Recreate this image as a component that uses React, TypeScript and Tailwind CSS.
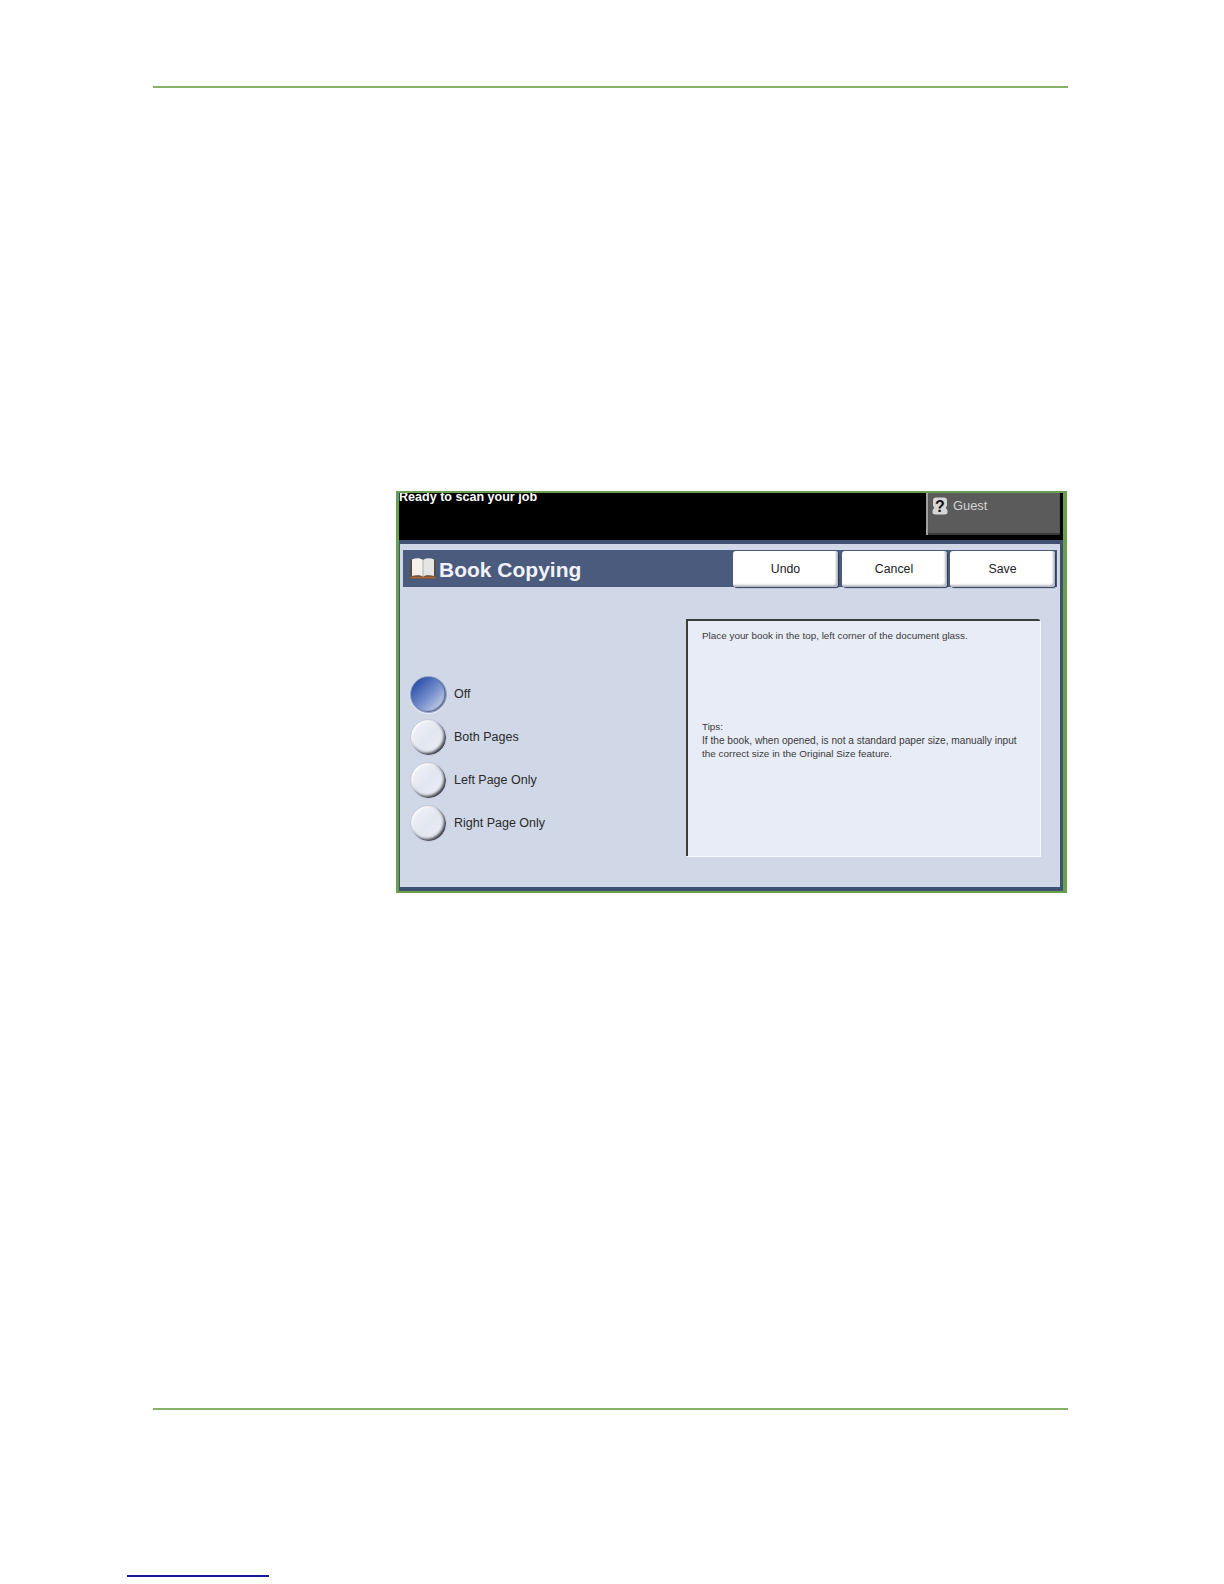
function BookIcon() {
  return (
    <svg width="26" height="21" viewBox="0 0 26 21">
      <path d="M0.5 2 V20.5 H25.5 V2 Z" fill="#5f4630" />
      <path d="M0.5 18.5 H25.5 V20.5 H0.5 Z" fill="#a5673a" />
      <path d="M2 1.5 C6 -0.3 10 -0.2 13 2 V18.5 C10 17 6 17 2 18 Z" fill="#f3f1ea" />
      <path d="M24 1.5 C20 -0.3 16 -0.2 13 2 V18.5 C16 17 20 17 24 18 Z" fill="#e4e5e4" />
      <path d="M13 2 V18.5" stroke="#a3a39d" strokeWidth="0.8" />
    </svg>
  );
}

function HelpIcon() {
  return (
    <svg width="16" height="18" viewBox="0 0 16 18" className="shrink-0">
      <path d="M4 0.5 H12 C14 0.5 15 1.5 15 3.5 V8 C15 9.5 14 9.5 14 11 C14 12 15.5 12.5 15.5 14 V15 C15.5 16.8 14.5 17.5 12.5 17.5 H3.5 C1.5 17.5 0.5 16.8 0.5 15 V14 C0.5 12.5 2 12 2 11 C2 9.5 1 9.5 1 8 V3.5 C1 1.5 2 0.5 4 0.5 Z" fill="#d6d6d6" />
      <text x="8" y="14.5" textAnchor="middle" fontSize="16" fontWeight="700" fontFamily="Liberation Sans, sans-serif" fill="#141414">?</text>
    </svg>
  );
}

function Radio({ label, on, className }: { label: string; on?: boolean; className: string }) {
  return (
    <div className={`flex items-center ${className}`}>
      <div
        className={
          on
            ? "h-[37px] w-[37px] rounded-full border border-[#8f9fc4] bg-gradient-to-br from-[#153a9e] via-[#7089c8] to-[#e2e6f2] shadow-[inset_-1.5px_-1px_1px_rgba(40,50,80,0.6),0_1px_1px_#eef1f8]"
            : "h-[37px] w-[37px] rounded-full border border-[#c4cadb] bg-gradient-to-br from-[#f3f5fa] via-[#e2e6f0] to-[#eef0f7] shadow-[inset_-2px_-2px_3px_#3a3d47,inset_1px_1px_2px_#ffffff]"
        }
      />
      <span className="ml-[7px] text-[12.5px] leading-none text-[#2a2a2a]">{label}</span>
    </div>
  );
}

function ActionButton({ label }: { label: string }) {
  return (
    <button className="flex h-[36px] w-[105px] items-center justify-center rounded-[3px] bg-white pt-[1px] text-[12.3px] text-[#222] shadow-[inset_-2px_-2px_2px_#b5b9c4,1px_1px_1px_#2f3a55]">
      {label}
    </button>
  );
}

export default function App() {
  return (
    <div className="h-[1584px] w-[1224px] overflow-hidden bg-white pt-[86px] font-['Liberation_Sans',Arial,sans-serif]">
      <div className="ml-[153px] h-[2px] w-[915px] bg-[#85b266]" />

      <div className="ml-[396px] mt-[403px] h-[402px] w-[671px] border-y-2 border-l-[3px] border-r-[4px] border-[#6b9f50] bg-[#d0d7e7]">
        <div className="flex h-[47px] justify-between overflow-hidden bg-black">
          <p className="text-[12.55px] font-bold leading-[8px] text-white">Ready to scan your job</p>
          <div className="mr-[3px] flex h-[42px] w-[134px] gap-[5px] border-l-2 border-[#a0a0a0] bg-[#5b5b5b] pl-[4px] pt-[4px] shadow-[inset_0_-2px_1px_#3a3a3a]">
            <HelpIcon />
            <span className="text-[12.9px] leading-[18px] text-[#d4d4d4]">Guest</span>
          </div>
        </div>
        <div className="h-[4px] bg-[#3f5070]" />

        <div className="h-[347px] border-b-4 border-l border-r-[3px] border-[#3f5070] pl-[3px] pt-[6px]">
          <div className="flex h-[37px] w-[654px] items-center justify-between bg-[#4a5b7e] pl-[7px] pr-[2px]">
            <div className="flex items-center gap-[3px]">
              <BookIcon />
              <h1 className="pt-[1px] text-[21px] font-bold leading-none text-[#f0f2f7]">Book Copying</h1>
            </div>
            <div className="flex gap-[3.5px]">
              <ActionButton label="Undo" />
              <ActionButton label="Cancel" />
              <ActionButton label="Save" />
            </div>
          </div>

          <div className="flex">
            <div className="ml-[7px] mt-[89px] w-[276px]">
              <Radio label="Off" on className="" />
              <Radio label="Both Pages" className="mt-[6px]" />
              <Radio label="Left Page Only" className="mt-[6px]" />
              <Radio label="Right Page Only" className="mt-[6px]" />
            </div>
            <div className="mt-[32px] h-[237px] w-[354px] rounded-tr-[2px] border-l-2 border-t-2 border-[#3a3f3a] bg-[#e8ecf6] pl-[14px] pt-[8px] text-[9.9px] leading-[13.5px] text-[#3a3a3a] shadow-[1px_1px_0_#f6f8fc]">
              <p>Place your book in the top, left corner of the document glass.</p>
              <p className="mt-[77.5px]">Tips:</p>
              <p>
                <span className="text-[10.15px]">If the book, when opened, is not a standard paper size, manually input</span>
                <br />
                <span className="text-[9.95px]">the correct size in the Original Size feature.</span>
              </p>
            </div>
          </div>
        </div>
      </div>

      <div className="ml-[153px] mt-[515px] h-[2px] w-[915px] bg-[#85b266]" />

      <div className="ml-[127px] mt-[165px] h-[2px] w-[142px] bg-[#1a1a9c]" />
    </div>
  );
}
